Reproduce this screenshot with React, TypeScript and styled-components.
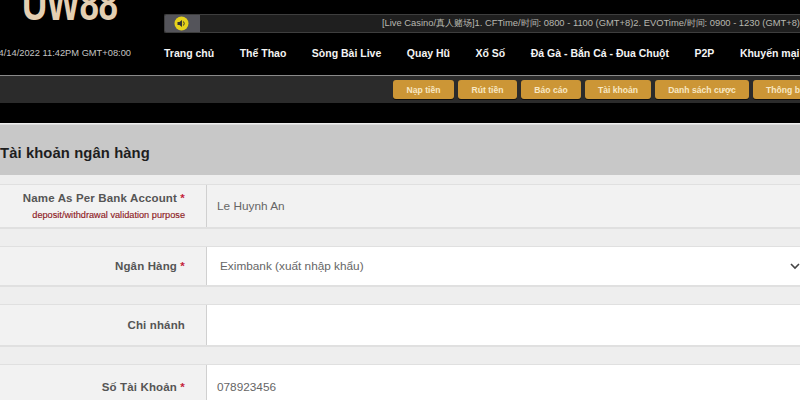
import React from "react";
import styled, { createGlobalStyle } from "styled-components";

const Global = createGlobalStyle`
  html, body { margin: 0; padding: 0; background: #eee; }
  body { font-family: "Liberation Sans", Arial, sans-serif; overflow: hidden; }
  * { box-sizing: border-box; }
`;

const Page = styled.div`
  width: 800px;
  height: 400px;
  overflow: hidden;
  background: #eeeeee;
`;

const Header = styled.header`
  height: 123px;
  background: #000;
`;

const TopRow = styled.div`
  height: 40px;
  display: flex;
`;

const LogoBox = styled.div`
  width: 164px;
  flex: none;
  height: 40px;
  padding-left: 22px;
  overflow: hidden;
`;

const Logo = styled.div`
  margin-top: -16px;
  font-size: 46px;
  line-height: 40px;
  font-weight: 700;
  letter-spacing: -0.5px;
  white-space: nowrap;
  color: #e4cfb2;
  transform: scaleX(0.76);
  transform-origin: left top;
`;

const Ticker = styled.div`
  margin-top: 14px;
  height: 19px;
  flex: 1;
  display: flex;
  background: #1f1f1f;
  border: 1px solid #3e3e3e;
  border-right: none;
  border-radius: 2px 0 0 2px;
  overflow: hidden;
`;

const Speaker = styled.div`
  width: 35px;
  flex: none;
  display: flex;
  align-items: center;
  justify-content: center;
  background: #54545a;
  padding-right: 2px;
`;

const TickerText = styled.div`
  flex: 1;
  display: flex;
  justify-content: flex-end;
  align-items: center;
  font-size: 9.37px;
  color: #b8b8b0;
  white-space: nowrap;
  overflow: hidden;
`;

const NavRow = styled.div`
  height: 36px;
  display: flex;
  align-items: center;
  padding-bottom: 9px;
  border-bottom: 1px solid #8a8a8a;
`;

const DateText = styled.div`
  width: 131px;
  flex: none;
  display: flex;
  justify-content: flex-end;
  font-size: 9.3px;
  color: #c4c4c4;
  white-space: nowrap;
  overflow: hidden;
`;

const Nav = styled.nav`
  margin-left: 33px;
  display: flex;
  gap: 25.5px;
  white-space: nowrap;
`;

const NavItem = styled.a`
  font-size: 10.5px;
  font-weight: 700;
  color: #f4f4f4;
`;

const SubBar = styled.div`
  height: 27px;
  background: #2b2b2b;
  display: flex;
  gap: 4px;
  padding: 4px 0 0 393px;
  white-space: nowrap;
  overflow: hidden;
`;

const GoldButton = styled.button<{ $w: number }>`
  width: ${(p) => p.$w}px;
  flex: none;
  height: 19px;
  border: none;
  border-radius: 3px;
  padding: 0;
  background: #cc9636;
  color: #f8e8c4;
  font: 700 8.6px "Liberation Sans", Arial, sans-serif;
  box-shadow: 0 1px 0 #111;
  text-align: center;
`;

const Title = styled.h1`
  margin: 1px 0 0;
  height: 51px;
  padding-top: 6px;
  display: flex;
  align-items: center;
  background: #c8c8c8;
  color: #1e1e1e;
  border-top: 1px solid #dcdcdc;
  font-size: 14.8px;
  font-weight: 700;
  letter-spacing: 0.1px;
`;

const Form = styled.div`
  padding-top: 9px;
  display: flex;
  flex-direction: column;
  gap: 17px;
`;

const Row = styled.div<{ $h: number }>`
  height: ${(p) => p.$h}px;
  flex: none;
  display: flex;
  border-top: 1px solid #e0e0e0;
  border-bottom: 2px solid #e0e0e0;
`;

const LabelCell = styled.div`
  width: 207px;
  flex: none;
  padding-right: 21px;
  display: flex;
  flex-direction: column;
  justify-content: center;
  align-items: flex-end;
  background: #f2f2f2;
  border-right: 1px solid #d0d0d0;
`;

const Label = styled.div`
  font-size: 11.5px;
  font-weight: 700;
  letter-spacing: 0.15px;
  color: #555;
  white-space: nowrap;
`;

const Star = styled.span`
  color: #c41e3a;
`;

const Hint = styled.div`
  margin-top: 6px;
  font-size: 9.2px;
  color: #8e1a24;
  white-space: nowrap;
  -webkit-text-stroke: 0.15px #8e1a24;
`;

const Value = styled.div<{ $bg: string }>`
  flex: 1;
  padding-left: 10px;
  display: flex;
  align-items: center;
  background: ${(p) => p.$bg};
  font-size: 11.8px;
  color: #666;
`;

const SelectBox = styled.div`
  flex: 1;
  padding: 0 0 0 13px;
  display: flex;
  align-items: center;
  justify-content: space-between;
  background: #fff;
  font-size: 11.8px;
  color: #666;
`;

const items = ["Trang chủ", "Thể Thao", "Sòng Bài Live", "Quay Hũ", "Xổ Số", "Đá Gà - Bắn Cá - Đua Chuột", "P2P", "Khuyến mại"];
const buttons: [string, number][] = [["Nạp tiền", 61], ["Rút tiền", 59], ["Báo cáo", 60], ["Tài khoản", 66], ["Danh sách cược", 94], ["Thông báo", 70]];

export default function App() {
  return (
    <Page>
      <Global />
      <Header>
        <TopRow>
          <LogoBox><Logo>UW88</Logo></LogoBox>
          <Ticker>
            <Speaker>
              <svg width="15" height="15" viewBox="0 0 15 15">
                <circle cx="7.5" cy="7.5" r="7" fill="#e6d21c" />
                <path d="M3.5 6h2l2.5-2v7l-2.5-2h-2z" fill="#333" />
                <path d="M9.5 5.5q1.5 2 0 4" stroke="#333" fill="none" />
              </svg>
            </Speaker>
            <TickerText>[Live Casino/真人赌场]1. CFTime/时间: 0800 - 1100 (GMT+8)2. EVOTime/时间: 0900 - 1230 (GMT+8)</TickerText>
          </Ticker>
        </TopRow>
        <NavRow>
          <DateText>4/14/2022 11:42PM GMT+08:00</DateText>
          <Nav>{items.map((t) => <NavItem key={t}>{t}</NavItem>)}</Nav>
        </NavRow>
        <SubBar>{buttons.map(([t, w]) => <GoldButton key={t} $w={w}>{t}</GoldButton>)}</SubBar>
      </Header>
      <Title>Tài khoản ngân hàng</Title>
      <Form>
        <Row $h={45}>
          <LabelCell>
            <Label>Name As Per Bank Account <Star>*</Star></Label>
            <Hint>deposit/withdrawal validation purpose</Hint>
          </LabelCell>
          <Value $bg="#f2f2f2">Le Huynh An</Value>
        </Row>
        <Row $h={41}>
          <LabelCell><Label>Ngân Hàng <Star>*</Star></Label></LabelCell>
          <SelectBox>
            Eximbank (xuất nhập khẩu)
            <svg width="10" height="10" viewBox="0 0 10 10"><path d="M1 3l4 4 4-4" stroke="#444" strokeWidth="1.6" fill="none" /></svg>
          </SelectBox>
        </Row>
        <Row $h={43}>
          <LabelCell><Label>Chi nhánh</Label></LabelCell>
          <Value $bg="#fff" />
        </Row>
        <Row $h={46}>
          <LabelCell><Label>Số Tài Khoản <Star>*</Star></Label></LabelCell>
          <Value $bg="#fff">078923456</Value>
        </Row>
      </Form>
    </Page>
  );
}
